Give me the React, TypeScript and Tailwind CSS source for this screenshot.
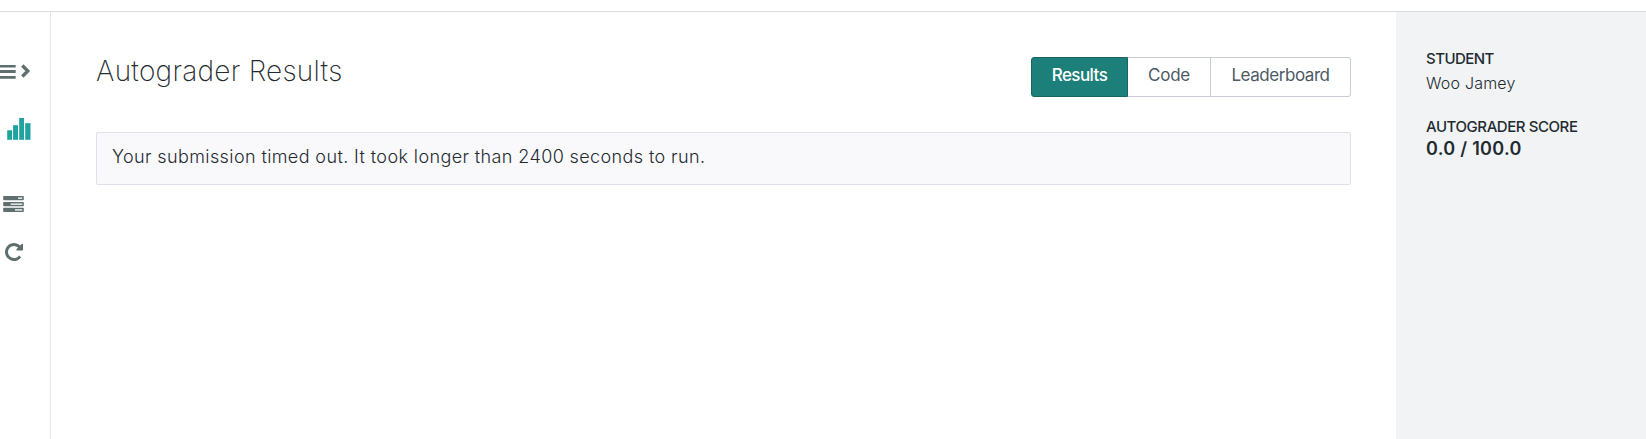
import React from "react";

const tabs = [
  { label: "Results", box: "w-[97px] bg-[#1c7f7a] border border-[#19655f] rounded-l-[3px] text-white font-medium", text: "tracking-[-0.55px]" },
  { label: "Code", box: "w-[83px] border-y border-r border-[#c9ced6] text-[#4b5a64] font-normal", text: "tracking-[-0.2px]" },
  { label: "Leaderboard", box: "w-[140px] border-y border-r border-[#c9ced6] rounded-r-[3px] text-[#4b5a64] font-normal", text: "tracking-[-0.45px]" },
];

function ExpandIcon() {
  return (
    <svg width="31" height="16" viewBox="0 0 31 16" fill="#5f6e6e">
      <rect x="-4" y="1.9" width="19.7" height="2.7" rx=".5" />
      <rect x="-4" y="7.1" width="19.7" height="2.8" rx=".5" />
      <rect x="-4" y="12.9" width="19.7" height="2.8" rx=".5" />
      <path d="M22.3 2.5 27.8 8l-5.500 5.500" fill="none" stroke="#5f6e6e" strokeWidth="3.3" />
    </svg>
  );
}

function ChartIcon() {
  return (
    <svg width="24" height="22" viewBox="0 0 24 22" fill="#1fa3a0">
      <rect x=".2" y="12.3" width="4.8" height="9.5" />
      <rect x="6.1" y="7.2" width="4.9" height="14.6" />
      <rect x="12.2" y="0" width="4.8" height="21.8" />
      <rect x="18.2" y="5.2" width="5.3" height="16.6" />
    </svg>
  );
}

function TasksIcon() {
  return (
    <svg width="21" height="16" viewBox="0 0 21 16">
      <g fill="#5f6e6e">
        <rect x=".2" y="0" width="20.6" height="4.2" rx=".7" />
        <rect x=".2" y="6" width="20.6" height="4.2" rx=".7" />
        <rect x=".2" y="11.8" width="20.6" height="4.2" rx=".7" />
      </g>
      <g fill="#fff">
        <rect x="15" y="1.5" width="4.3" height="1.3" />
        <rect x="7.7" y="7.5" width="11.6" height="1.3" />
        <rect x="12" y="13.3" width="7.3" height="1.3" />
      </g>
    </svg>
  );
}

function RerunIcon() {
  return (
    <svg width="18" height="18" viewBox="128 128 1536 1536" fill="#5f6e6e">
      <path d="M1664 256v448q0 26-19 45t-45 19h-448q-42 0-59-40-17-39 14-69l138-138q-148-137-349-137-104 0-198.500 40.500t-163.500 109.500-109.500 163.500-40.500 198.500 40.500 198.500 109.500 163.500 163.500 109.500 198.500 40.500q119 0 225-52t179-147q7-10 23-12 15 0 25 9l137 138q9 8 9.500 20.500t-7.500 22.500q-109 132-264 204.500t-327 72.500q-156 0-298-61t-245-164-164-245-61-298 61-298 164-245 245-164 298-61q147 0 284.500 55.500t244.500 156.500l130-129q29-31 70-14 39 17 39 59z" />
    </svg>
  );
}

export default function App() {
  return (
    <div className="flex h-[439px] w-[1646px] flex-col overflow-hidden bg-white font-['Inter',sans-serif] text-[#1f2b30]">
      <header className="h-3 shrink-0 border-b border-[#dadde0]" />
      <div className="flex flex-1">
        <nav className="flex w-[51px] shrink-0 flex-col items-start border-r border-[#e3e5e8] pt-[51px]">
          <ExpandIcon />
          <div className="ml-[7px] mt-[39px]"><ChartIcon /></div>
          <div className="ml-[3px] mt-[56px]"><TasksIcon /></div>
          <div className="ml-[4.5px] mt-[31px]"><RerunIcon /></div>
        </nav>
        <main className="flex flex-1 flex-col pl-[45px] pr-[45px] pt-[45px]">
          <div className="flex h-10 items-start justify-between">
            <h1 className="whitespace-nowrap text-[28px] font-[250] leading-[28px] tracking-[0.25px]">Autograder Results</h1>
            <div className="flex h-10 text-[17px] leading-[35px]">
              {tabs.map((t) => (
                <button key={t.label} className={`flex h-10 justify-center whitespace-nowrap ${t.box}`}>
                  <span className={t.text}>{t.label}</span>
                </button>
              ))}
            </div>
          </div>
          <section className="mt-[35px] h-[53px] rounded-[2px] border border-[#dfe1ea] bg-[#f9f9fc] pl-[15px] pt-[11px]">
            <p className="whitespace-nowrap text-[18px] font-light leading-[26px] tracking-[0.39px]">
              Your submission timed out. It took longer than 2400 seconds to run.
            </p>
          </section>
        </main>
        <aside className="w-[250px] shrink-0 bg-[#f1f3f5] pl-[30px] pt-[36px]">
          <h2 className="text-[15px] font-medium leading-[22px] tracking-[-0.55px]">STUDENT</h2>
          <p className="mt-[1px] text-[16px] font-light leading-[24px] tracking-[0.2px]">Woo Jamey</p>
          <h2 className="mt-[21px] text-[15px] font-medium leading-[22px] tracking-[-0.43px]">AUTOGRADER SCORE</h2>
          <p className="text-[18px] font-semibold leading-[22px] tracking-[0.3px]">0.0 / 100.0</p>
        </aside>
      </div>
    </div>
  );
}
